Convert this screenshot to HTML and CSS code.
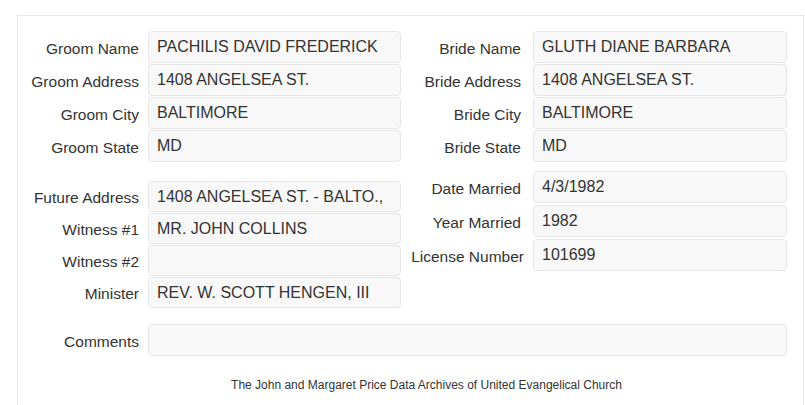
FILE: index.html
```html
<!DOCTYPE html>
<html lang="en">
<head>
    <meta charset="UTF-8">
    <meta name="viewport" content="width=device-width, initial-scale=1.0">
    <title>Marriage Record</title>
    <link rel="stylesheet" href="styles.css">
</head>
<body>
    <div class="panel">
        <div class="columns">
            <div class="column left">
                <div class="group first">
                    <div class="row"><label>Groom Name</label><input class="field" readonly value="PACHILIS DAVID FREDERICK"></div>
                    <div class="row"><label>Groom Address</label><input class="field" readonly value="1408 ANGELSEA ST."></div>
                    <div class="row"><label>Groom City</label><input class="field" readonly value="BALTIMORE"></div>
                    <div class="row"><label>Groom State</label><input class="field" readonly value="MD"></div>
                </div>
                <div class="group second">
                    <div class="row"><label>Future Address</label><input class="field" readonly value="1408 ANGELSEA ST. - BALTO.,"></div>
                    <div class="row"><label>Witness #1</label><input class="field" readonly value="MR. JOHN COLLINS"></div>
                    <div class="row"><label>Witness #2</label><input class="field" readonly value=""></div>
                    <div class="row wide"><label>Minister</label><input class="field" readonly value="REV. W. SCOTT HENGEN, III"></div>
                </div>
            </div>
            <div class="column right">
                <div class="group first">
                    <div class="row"><label>Bride Name</label><input class="field" readonly value="GLUTH DIANE BARBARA"></div>
                    <div class="row"><label>Bride Address</label><input class="field" readonly value="1408 ANGELSEA ST."></div>
                    <div class="row"><label>Bride City</label><input class="field" readonly value="BALTIMORE"></div>
                    <div class="row"><label>Bride State</label><input class="field" readonly value="MD"></div>
                </div>
                <div class="group third">
                    <div class="row"><label>Date Married</label><input class="field" readonly value="4/3/1982"></div>
                    <div class="row"><label>Year Married</label><input class="field" readonly value="1982"></div>
                    <div class="row"><label class="long">License Number</label><input class="field" readonly value="101699"></div>
                </div>
            </div>
        </div>
        <div class="row comments"><label>Comments</label><input class="field" readonly value=""></div>
        <p class="footer">The John and Margaret Price Data Archives of United Evangelical Church</p>
    </div>
</body>
</html>
```

FILE: styles.css
```css
body {
    margin: 0;
    padding: 0;
    background: white;
    color: #333;
    font-family: "Liberation Sans", Arial, sans-serif;
    overflow: hidden;
}
.panel {
    margin: 15px 0 0 17px;
    width: 785px;
    height: 374px;
    border: 1px solid #e6e6e6;
    border-bottom: none;
    padding-top: 15px;
}
.columns {
    display: flex;
}
.column {
    flex: none;
}
.column.left {
    width: 383px;
}
.group {
    display: flex;
    flex-direction: column;
    gap: 1px;
}
.group.second {
    margin-top: 19px;
}
.group.third {
    margin-top: 9px;
    gap: 2px;
}
.row {
    display: flex;
    align-items: center;
    height: 32px;
}
.group.second .row {
    height: 31px;
}
.row label {
    flex: none;
    text-align: right;
    font-size: 15.5px;
    padding-top: 3px;
    white-space: nowrap;
}
.left .row label,
.comments label {
    width: 121px;
    margin-right: 9px;
}
.right .row label {
    width: 120px;
    margin-right: 12px;
}
.right .row label.long {
    margin-right: 9px;
    padding-left: 3px;
    direction: rtl;
}
.field {
    box-sizing: border-box;
    height: 100%;
    padding: 0 8px;
    margin: 0;
    border: 1px solid #e6e6e6;
    border-radius: 4px;
    background: #f8f8f8;
    color: #333;
    font-family: inherit;
    font-size: 16px;
    outline: none;
}
.left .field {
    width: 253px;
}
.left .wide .field {
    width: 302px;
}
.right .field {
    width: 254px;
}
.comments {
    margin-top: 16px;
}
.comments .field {
    width: 639px;
}
.footer {
    margin: 22px 0 0;
    padding-left: 32px;
    text-align: center;
    font-size: 12px;
}
```
